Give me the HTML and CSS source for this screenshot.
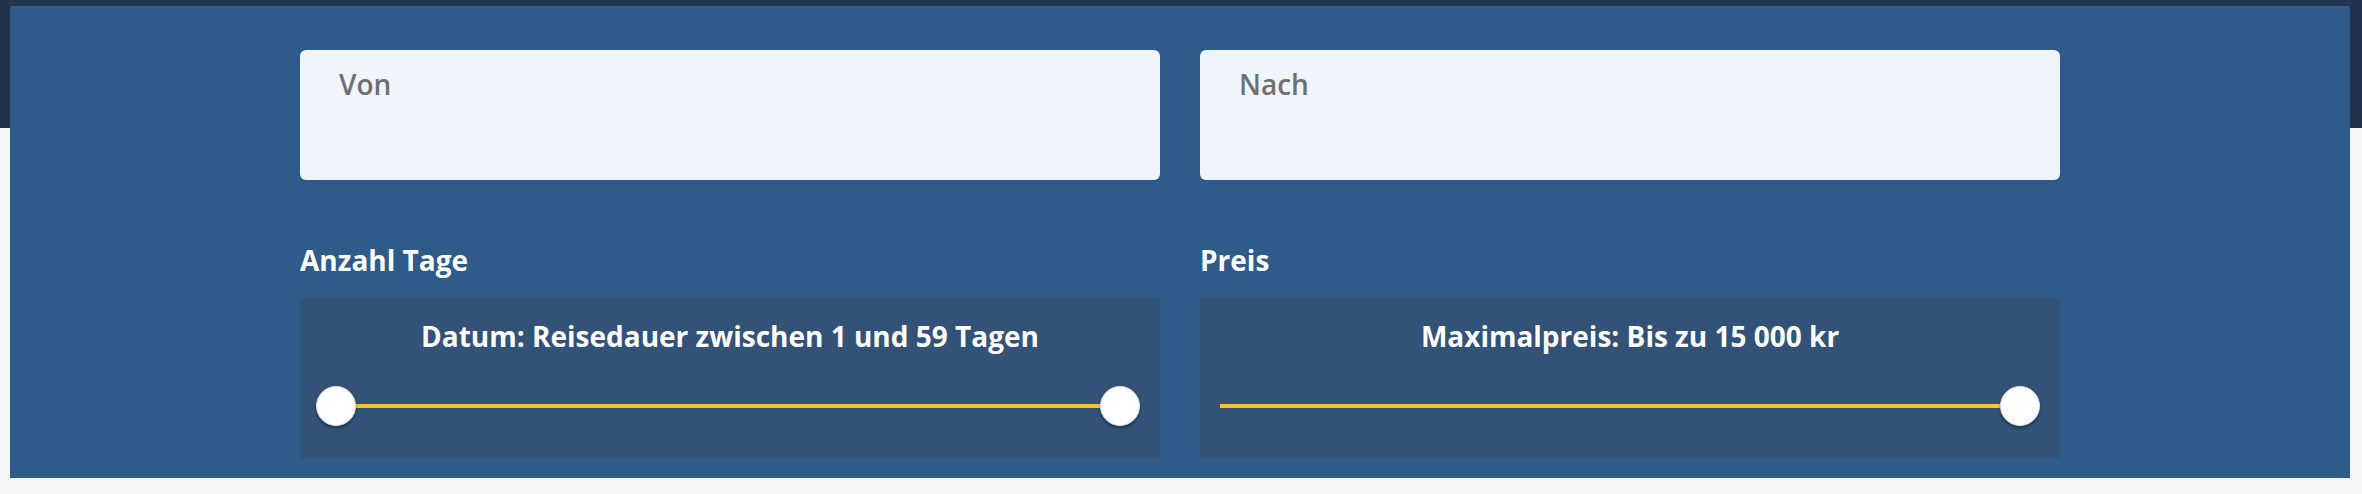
FILE: index.html
```html
<!DOCTYPE html>
<html lang="de">
<head>
    <meta charset="UTF-8">
    <meta name="viewport" content="width=device-width, initial-scale=1.0">
    <title>Reisesuche</title>
    <link rel="stylesheet" href="styles.css">
</head>
<body>
    <div class="page">
        <form class="search-panel">
            <div class="search-grid">
                <div class="field"><span class="field-label">Von</span></div>
                <div class="field"><span class="field-label">Nach</span></div>

                <div class="filter">
                    <h3 class="filter-title">Anzahl Tage</h3>
                    <div class="slider-box">
                        <p class="slider-text">Datum: Reisedauer zwischen 1 und 59 Tagen</p>
                        <div class="slider">
                            <div class="slider-range" style="left: 20px; width: 784px;"></div>
                            <span class="slider-thumb" style="left: 0px;"></span>
                            <span class="slider-thumb" style="left: 784px;"></span>
                        </div>
                    </div>
                </div>

                <div class="filter">
                    <h3 class="filter-title">Preis</h3>
                    <div class="slider-box">
                        <p class="slider-text">Maximalpreis: Bis zu 15 000 kr</p>
                        <div class="slider">
                            <div class="slider-range" style="left: 4px; width: 800px;"></div>
                            <span class="slider-thumb" style="left: 784px;"></span>
                        </div>
                    </div>
                </div>
            </div>
        </form>
    </div>
</body>
</html>
```

FILE: styles.css
```css
body {
    margin: 0;
    font-family: "Open Sans", "Liberation Sans", sans-serif;
    background-color: #f6f6f6;
}
.page {
    padding: 6px 12px 16px 10px;
    background: linear-gradient(#22334e 0, #22334e 128px, #f6f6f6 128px);
}
.search-panel {
    background-color: #2e5b8a;
    padding: 44px 0 20px;
}
.search-grid {
    width: 1760px;
    margin: 0 auto;
    display: grid;
    grid-template-columns: 860px 860px;
    column-gap: 40px;
    row-gap: 60px;
}
.field {
    height: 130px;
    box-sizing: border-box;
    padding: 14px 39px;
    background-color: #f0f4fb;
    border-radius: 6px;
}
.field-label {
    display: block;
    font-size: 28px;
    line-height: 40px;
    font-weight: 600;
    color: #6f6f6f;
}
.filter-title {
    margin: 0 0 18px;
    font-size: 28px;
    line-height: 40px;
    font-weight: 700;
    color: #fff;
}
.slider-box {
    background-color: #325278;
    height: 160px;
    box-sizing: border-box;
    padding: 18px 16px 0;
}
.slider-text {
    margin: 0;
    text-align: center;
    font-size: 28px;
    line-height: 40px;
    font-weight: 700;
    color: #fff;
}
.slider {
    position: relative;
    height: 40px;
    margin-top: 30px;
}
.slider-range {
    position: absolute;
    top: 18px;
    height: 4px;
    background-color: #f9c623;
}
.slider-thumb {
    position: absolute;
    top: 0;
    width: 40px;
    height: 40px;
    box-sizing: border-box;
    border-radius: 50%;
    background-color: #fff;
    border: 1px solid #dcdde3;
    box-shadow: 0 2px 3px rgba(0,0,0,0.35);
}
```
